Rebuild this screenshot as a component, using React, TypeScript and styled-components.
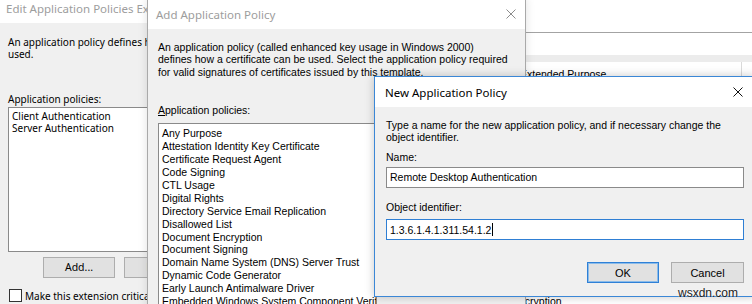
import React from 'react';
import styled, { createGlobalStyle } from 'styled-components';

const UI = `"Noto Sans", "Segoe UI", sans-serif`;
const MS = `"Liberation Sans", Arial, sans-serif`;

const GlobalStyle = createGlobalStyle`
  html, body {
    margin: 0;
    padding: 0;
    background: #f0f0f0;
  }
  body {
    width: 752px;
    height: 304px;
    overflow: hidden;
  }
`;

const Desktop = styled.div`
  position: relative;
  width: 752px;
  height: 304px;
  overflow: hidden;
  background: #f0f0f0;
`;

// windows sit on the desktop at fixed places, they overlap each other
const Frame = styled.div<{ $x: number; $y: number; $w: number; $h: number; $active?: boolean }>`
  position: absolute;
  left: ${(p) => p.$x}px;
  top: ${(p) => p.$y}px;
  width: ${(p) => p.$w}px;
  height: ${(p) => p.$h}px;
  box-sizing: border-box;
  display: flex;
  flex-direction: column;
  background: #f0f0f0;
  border: 1px solid ${(p) => (p.$active ? '#3b87d6' : '#a9a9a9')};
  box-shadow: 0 0 9px rgba(0, 0, 0, ${(p) => (p.$active ? 0.22 : 0.12)});
  overflow: hidden;
`;

const TitleBar = styled.div<{ $h: number; $pad: number }>`
  flex: none;
  height: ${(p) => p.$h}px;
  display: flex;
  align-items: center;
  justify-content: space-between;
  padding-left: ${(p) => p.$pad}px;
  background: #fff;
`;

const TitleText = styled.span<{ $active?: boolean }>`
  font-family: ${UI};
  font-size: 11.5px;
  color: ${(p) => (p.$active ? '#000' : '#9d9d9d')};
  white-space: nowrap;
`;

const CloseBtn = styled.div<{ $w: number }>`
  flex: none;
  width: ${(p) => p.$w}px;
  height: 100%;
  display: flex;
  align-items: center;
  justify-content: center;
`;

const Body = styled.div<{ $pad: string }>`
  flex: 1;
  display: flex;
  flex-direction: column;
  padding: ${(p) => p.$pad};
  min-height: 0;
`;

const Text = styled.div<{ $font: 'ui' | 'ms'; $lh: number; $mt?: number }>`
  font-family: ${(p) => (p.$font === 'ui' ? UI : MS)};
  font-size: ${(p) => (p.$font === 'ui' ? '10px' : '10.5px')};
  line-height: ${(p) => p.$lh}px;
  margin-top: ${(p) => p.$mt ?? 0}px;
  color: #000;
  white-space: nowrap;
`;

const ListBox = styled.div<{ $font: 'ui' | 'ms'; $lh: number; $w: number; $h: number; $mt: number; $pt?: number }>`
  flex: none;
  box-sizing: border-box;
  width: ${(p) => p.$w}px;
  height: ${(p) => p.$h}px;
  margin-top: ${(p) => p.$mt}px;
  padding: ${(p) => p.$pt ?? 2}px 3px 0 3px;
  background: #fff;
  border: 1px solid #8a8a8a;
  font-family: ${(p) => (p.$font === 'ui' ? UI : MS)};
  font-size: ${(p) => (p.$font === 'ui' ? '10px' : '10.5px')};
  line-height: ${(p) => p.$lh}px;
  color: #000;
  white-space: nowrap;
  overflow: hidden;
`;

const ButtonRow = styled.div<{ $mt: number; $pl?: number; $end?: boolean; $gap: number }>`
  display: flex;
  justify-content: ${(p) => (p.$end ? 'flex-end' : 'flex-start')};
  gap: ${(p) => p.$gap}px;
  margin-top: ${(p) => p.$mt}px;
  padding-left: ${(p) => p.$pl ?? 0}px;
`;

const Button = styled.div<{ $w: number; $default?: boolean; $font: 'ui' | 'ms' }>`
  flex: none;
  box-sizing: border-box;
  width: ${(p) => p.$w}px;
  height: 21px;
  display: flex;
  align-items: center;
  justify-content: center;
  background: #e1e1e1;
  border: 1px solid ${(p) => (p.$default ? '#2f80d6' : '#adadad')};
  box-shadow: ${(p) => (p.$default ? 'inset 0 0 0 1px #8bbcea' : 'none')};
  font-family: ${(p) => (p.$font === 'ui' ? UI : MS)};
  font-size: ${(p) => (p.$font === 'ui' ? '10.5px' : '11px')};
  color: #000;
`;

const CheckRow = styled.div`
  display: flex;
  align-items: center;
  gap: 3px;
  margin-top: 11px;
  padding-left: 1px;
  font-family: ${UI};
  font-size: 10px;
  white-space: nowrap;
`;

const CheckBox = styled.span`
  flex: none;
  width: 13px;
  height: 13px;
  box-sizing: border-box;
  border: 1px solid #333;
  background: #fff;
`;

const Field = styled.div<{ $mt: number; $focus?: boolean }>`
  box-sizing: border-box;
  height: 21px;
  margin-top: ${(p) => p.$mt}px;
  display: flex;
  align-items: center;
  padding-left: 3px;
  background: #fff;
  border: 1px solid ${(p) => (p.$focus ? '#2f7fd4' : '#8a8a8a')};
  font-family: ${MS};
  font-size: 10.5px;
  color: #000;
  white-space: nowrap;
`;

const Caret = styled.span`
  display: inline-block;
  width: 1px;
  height: 13px;
  margin-left: 1px;
  background: #000;
`;

// the properties window far behind, only its list edges peek out
const BackPane = styled.div`
  position: absolute;
  left: 505px;
  top: 0;
  width: 260px;
  height: 304px;
  display: flex;
  flex-direction: column;
  background: #fff;
  font-family: ${MS};
  font-size: 10.5px;
  color: #000;
`;

const PaneBlock = styled.div<{ $h: number; $bg?: string; $line?: string }>`
  flex: none;
  height: ${(p) => p.$h}px;
  background: ${(p) => p.$bg ?? '#fff'};
  border-bottom: ${(p) => (p.$line ? `1px solid ${p.$line}` : 'none')};
`;

const PaneRow = styled.div`
  flex: none;
  width: 237px;
  height: 15px;
  box-sizing: border-box;
  padding: 6px 0 0 15px;
  line-height: 12px;
  border-right: 1px solid #dadada;
  white-space: nowrap;
`;

const PaneBottom = styled.div`
  margin-top: auto;
  margin-left: 8px;
  height: 9px;
  padding-left: 0;
  line-height: 12px;
  border-left: 1px solid #9a9a9a;
  white-space: nowrap;
  text-indent: -2px;
`;

const Watermark = styled.div`
  position: absolute;
  left: 678px;
  top: 286px;
  font-family: ${MS};
  font-size: 12px;
  line-height: 14px;
  color: #222;
  text-shadow: 0 0 2px #fff;
`;

const CloseIcon = ({ color }: { color: string }) => (
  <svg width="10" height="10" viewBox="0 0 10 10">
    <path d="M0.5 0.5 L9.5 9.5 M9.5 0.5 L0.5 9.5" stroke={color} strokeWidth="1" fill="none" />
  </svg>
);

const policies = [
  'Any Purpose',
  'Attestation Identity Key Certificate',
  'Certificate Request Agent',
  'Code Signing',
  'CTL Usage',
  'Digital Rights',
  'Directory Service Email Replication',
  'Disallowed List',
  'Document Encryption',
  'Document Signing',
  'Domain Name System (DNS) Server Trust',
  'Dynamic Code Generator',
  'Early Launch Antimalware Driver',
  'Embedded Windows System Component Verification',
  'Encrypting File System',
];

export default function App() {
  return (
    <Desktop>
      <GlobalStyle />

      <BackPane>
        <PaneBlock $h={32} $line="#a3a3a3" />
        <PaneBlock $h={22} />
        <PaneBlock $h={7} $bg="#ececec" />
        <PaneRow>Extended Purpose</PaneRow>
        <PaneBottom>Encryption</PaneBottom>
      </BackPane>

      <Frame $x={-1} $y={-8} $w={400} $h={340}>
        <TitleBar $h={30} $pad={6}>
          <TitleText>Edit Application Policies Extension</TitleText>
        </TitleBar>
        <Body $pad="13px 0 0 8px">
          <Text $font="ui" $lh={12.3}>
            An application policy defines how a certificate can be
            <br />
            used.
          </Text>
          <Text $font="ui" $lh={12.3} $mt={32}>
            Application policies:
          </Text>
          <ListBox $font="ui" $lh={12.3} $w={330} $h={145} $mt={2}>
            <div>Client Authentication</div>
            <div>Server Authentication</div>
          </ListBox>
          <ButtonRow $mt={5} $pl={35} $gap={9}>
            <Button $w={72} $font="ui">Add...</Button>
            <Button $w={72} $font="ui">Edit...</Button>
            <Button $w={72} $font="ui">Remove</Button>
          </ButtonRow>
          <CheckRow>
            <CheckBox />
            <span>Make this extension critical</span>
          </CheckRow>
        </Body>
      </Frame>

      <Frame $x={147} $y={-2} $w={379} $h={340}>
        <TitleBar $h={30} $pad={8}>
          <TitleText>Add Application Policy</TitleText>
          <CloseBtn $w={28}>
            <CloseIcon color="#8c8c8c" />
          </CloseBtn>
        </TitleBar>
        <Body $pad="12px 10px 0 10px">
          <Text $font="ms" $lh={12.3}>
            An application policy (called enhanced key usage in Windows 2000)
            <br />
            defines how a certificate can be used. Select the application policy required
            <br />
            for valid signatures of certificates issued by this template.
          </Text>
          <Text $font="ms" $lh={12.3} $mt={26.5}>
            <u>A</u>pplication policies:
          </Text>
          <ListBox $font="ms" $lh={12.92} $w={219} $h={220} $mt={6.5} $pt={3}>
            {policies.map((p) => (
              <div key={p}>{p}</div>
            ))}
          </ListBox>
        </Body>
      </Frame>

      <Frame $x={374} $y={76} $w={382} $h={221} $active>
        <TitleBar $h={30} $pad={10}>
          <TitleText $active>New Application Policy</TitleText>
          <CloseBtn $w={34}>
            <CloseIcon color="#111" />
          </CloseBtn>
        </TitleBar>
        <Body $pad="12px 11px 0 11px">
          <Text $font="ms" $lh={12}>
            Type a name for the new application policy, and if necessary change the
            <br />
            object identifier.
          </Text>
          <Text $font="ms" $lh={12} $mt={8.3}>
            Name:
          </Text>
          <Field $mt={3.4}>Remote Desktop Authentication</Field>
          <Text $font="ms" $lh={12} $mt={13.6}>
            Object identifier:
          </Text>
          <Field $mt={6} $focus>
            1.3.6.1.4.1.311.54.1.2
            <Caret />
          </Field>
          <ButtonRow $mt={22} $end $gap={12}>
            <Button $w={72} $default $font="ms">OK</Button>
            <Button $w={73} $font="ms">Cancel</Button>
          </ButtonRow>
        </Body>
      </Frame>

      <Watermark>wsxdn.com</Watermark>
    </Desktop>
  );
}
